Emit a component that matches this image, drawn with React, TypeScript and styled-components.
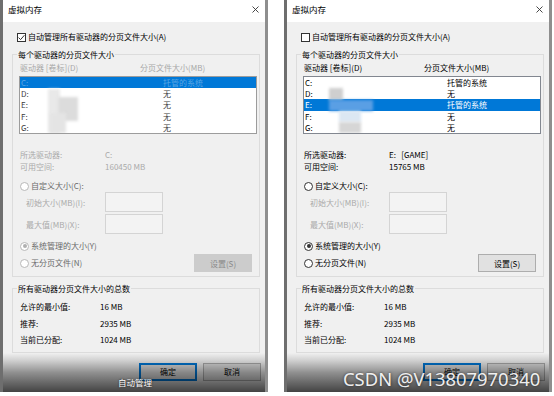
import React from 'react';
import styled, { createGlobalStyle } from 'styled-components';

const GlobalStyle = createGlobalStyle`
  html, body { margin: 0; padding: 0; background: #fff; }
  body { font-family: "Noto Sans CJK SC", "Noto Sans", sans-serif; }
  * { box-sizing: border-box; }
`;

const Page = styled.div`
  width: 554px;
  height: 396px;
  display: flex;
  gap: 16px;
  overflow: hidden;
  background: #fff;
`;

const Window = styled.div`
  position: relative;
  flex: none;
  width: 268px;
  height: 392px;
  display: flex;
  flex-direction: column;
  border-left: 3px solid #6e6e6e;
  border-right: 3px solid #8e8e8e;
  background: #f0f0f0;
  font-size: 8px;
  color: #000;
`;

const TitleBar = styled.div`
  height: 22px;
  flex: none;
  background: #fff;
  display: flex;
  align-items: center;
  justify-content: space-between;
  padding: 0 6px 4px 5px;
`;

const Title = styled.span`
  font-size: 8.5px;
  line-height: 10px;
  color: #000;
`;

const CloseIcon = () => (
  <svg width="7" height="7" viewBox="0 0 7 7">
    <path d="M0.5 0.5 L6.5 6.5 M6.5 0.5 L0.5 6.5" stroke="#333" strokeWidth="0.9" fill="none" />
  </svg>
);

const CheckRow = styled.div`
  display: flex;
  align-items: center;
  gap: 2px;
  height: 10px;
  line-height: 10px;
  margin: 10px 0 0 14px;
`;

const CheckBox = styled.span`
  width: 9px;
  height: 9px;
  border: 1px solid #333;
  background: #fff;
  display: flex;
  align-items: center;
  justify-content: center;
`;

const Group = styled.div<{ $mt: number; $pad: string }>`
  position: relative;
  margin: ${p => p.$mt}px 5px 0 9px;
  padding: ${p => p.$pad};
  border: 1px solid #dcdcdc;
`;

const Legend = styled.span`
  position: absolute;
  top: -6px;
  left: 4px;
  padding: 0 1px;
  background: #f0f0f0;
  line-height: 11px;
  color: #000;
`;

const HeaderRow = styled.div<{ $on: boolean }>`
  display: grid;
  grid-template-columns: 120px 1fr;
  margin: 8px 0 0 7px;
  line-height: 9px;
  height: 9px;
  color: ${p => (p.$on ? '#000' : '#a8a8a8')};
`;

const ListBox = styled.div<{ $on: boolean }>`
  position: relative;
  margin: 4px 0 0 6px;
  width: 238px;
  height: 58px;
  border: 1px solid ${p => (p.$on ? '#828790' : '#9c9c9c')};
  background: #fff;
  overflow: hidden;
`;

const ListRow = styled.div<{ $sel: boolean; $on: boolean }>`
  display: grid;
  grid-template-columns: 142px 1fr;
  height: 11.2px;
  line-height: 11.2px;
  padding-left: 1px;
  background: ${p => (p.$sel ? '#0078d7' : 'transparent')};
  color: ${p =>
    p.$sel ? (p.$on ? '#fff' : 'rgba(255,255,255,0.35)') : p.$on ? '#000' : '#3c3c3c'};
`;

const Smudge = styled.div<{ $x: number; $y: number; $w: number; $h: number; $c: string }>`
  position: absolute;
  left: ${p => p.$x}px;
  top: ${p => p.$y}px;
  width: ${p => p.$w}px;
  height: ${p => p.$h}px;
  background: ${p => p.$c};
  filter: blur(1.5px);
`;

const InfoGrid = styled.div<{ $on: boolean }>`
  display: grid;
  grid-template-columns: 85px 1fr;
  grid-auto-rows: 12px;
  line-height: 12px;
  margin: 15px 0 0 7px;
  color: ${p => (p.$on ? '#000' : '#aaaaaa')};
  white-space: pre;
`;

const RadioRow = styled.div<{ $mt: number; $tone: string }>`
  display: flex;
  align-items: center;
  gap: 2px;
  height: 10px;
  line-height: 10px;
  margin: ${p => p.$mt}px 0 0 7px;
  color: ${p => p.$tone};
`;

const RadioDot = styled.span<{ $on: boolean; $checked: boolean }>`
  width: 9px;
  height: 9px;
  border-radius: 50%;
  border: 1px solid ${p => (p.$on ? '#333' : '#b8b8b8')};
  background: #fff;
  display: flex;
  align-items: center;
  justify-content: center;
  &::after {
    content: '';
    display: ${p => (p.$checked ? 'block' : 'none')};
    width: 4px;
    height: 4px;
    border-radius: 50%;
    background: ${p => (p.$on ? '#333' : '#b0b0b0')};
  }
`;

const SizeRow = styled.div<{ $mt: number }>`
  display: grid;
  grid-template-columns: 79px 58px;
  align-items: center;
  height: 20px;
  margin: ${p => p.$mt}px 0 0 13px;
  color: #aaaaaa;
`;

const SizeInput = styled.div`
  width: 58px;
  height: 20px;
  border: 1px solid #d4d4d4;
  background: #f3f3f3;
`;

const BottomRow = styled.div`
  display: flex;
  align-items: center;
  justify-content: space-between;
  height: 18px;
  margin-top: 3px;
  padding-right: 7px;
`;

const SetButton = styled.div<{ $on: boolean }>`
  width: 58px;
  height: 18px;
  display: flex;
  align-items: center;
  justify-content: center;
  border: 1px solid ${p => (p.$on ? '#adadad' : '#cccccc')};
  background: ${p => (p.$on ? '#e1e1e1' : '#cccccc')};
  color: ${p => (p.$on ? '#000' : '#8a8a8a')};
`;

const SummaryGrid = styled.div`
  display: grid;
  grid-template-columns: 80px 1fr;
  grid-auto-rows: 16.5px;
  line-height: 16.5px;
`;

const Footer = styled.div`
  position: relative;
  flex: 1;
  display: flex;
  justify-content: flex-end;
  align-items: flex-start;
  gap: 6px;
  padding: 10px 4px 0 0;
  &::after {
    content: '';
    position: absolute;
    inset: 0;
    background: linear-gradient(
      to bottom,
      rgba(0, 0, 0, 0) 0%,
      rgba(0, 0, 0, 0.14) 20%,
      rgba(0, 0, 0, 0.4) 50%,
      rgba(0, 0, 0, 0.72) 100%
    );
    pointer-events: none;
  }
`;

const DialogButton = styled.div<{ $primary?: boolean }>`
  width: 58px;
  height: 18px;
  display: flex;
  align-items: center;
  justify-content: center;
  border: 1px solid ${p => (p.$primary ? '#0078d7' : '#adadad')};
  box-shadow: ${p => (p.$primary ? 'inset 0 0 0 1px #0078d7' : 'none')};
  background: #e1e1e1;
  color: #000;
`;

const Caption = styled.div`
  position: absolute;
  left: 115px;
  top: 377px;
  z-index: 2;
  font-size: 8.5px;
  line-height: 11px;
  color: #fff;
  text-shadow: 0 0 2px rgba(0, 0, 0, 0.8);
`;

const Watermark = styled.div`
  position: absolute;
  left: 56px;
  top: 368px;
  z-index: 2;
  font-family: "Noto Sans", sans-serif;
  font-size: 18.4px;
  line-height: 22px;
  color: rgba(255, 255, 255, 0.92);
  text-shadow: 0 0 3px rgba(0, 0, 0, 0.6);
  white-space: nowrap;
`;

type SmudgeDef = { x: number; y: number; w: number; h: number; c: string };

type WinDef = {
  key: string;
  enabled: boolean;
  auto: boolean;
  selected: number;
  rows: [string, string][];
  drive: string;
  free: string;
  smudges: SmudgeDef[];
  caption?: string;
  watermark?: string;
};

const windows: WinDef[] = [
  {
    key: 'a',
    enabled: false,
    auto: true,
    selected: 0,
    rows: [
      ['C:', '托管的系统'],
      ['D:', '无'],
      ['E:', '无'],
      ['F:', '无'],
      ['G:', '无'],
    ],
    drive: 'C:',
    free: '160450 MB',
    smudges: [
      { x: 28, y: 12, w: 12, h: 44, c: '#e9e9e9' },
      { x: 38, y: 20, w: 20, h: 24, c: '#dcdcdc' },
      { x: 30, y: 36, w: 16, h: 20, c: '#e4e4e4' },
    ],
    caption: '自动管理',
  },
  {
    key: 'b',
    enabled: true,
    auto: false,
    selected: 2,
    rows: [
      ['C:', '托管的系统'],
      ['D:', '无'],
      ['E:', '托管的系统'],
      ['F:', '无'],
      ['G:', '无'],
    ],
    drive: 'E:   [GAME]',
    free: '15765 MB',
    smudges: [
      { x: 25, y: 11, w: 14, h: 12, c: '#cfcfcf' },
      { x: 25, y: 23, w: 44, h: 11, c: '#5a9fe4' },
      { x: 35, y: 34, w: 22, h: 11, c: '#dbe7f3' },
      { x: 35, y: 45, w: 22, h: 11, c: '#d6d6d6' },
    ],
    watermark: 'CSDN @V13807970340',
  },
];

const Dialog = ({ w }: { w: WinDef }) => {
  const on = w.enabled;
  const radioTone = on ? '#000' : '#6a6a6a';
  return (
    <Window>
      <TitleBar>
        <Title>虚拟内存</Title>
        <CloseIcon />
      </TitleBar>
      <CheckRow>
        <CheckBox>
          {w.auto && (
            <svg width="7" height="7" viewBox="0 0 7 7">
              <path d="M0.6 3.6 L2.6 5.6 L6.4 1.2" stroke="#333" strokeWidth="1" fill="none" />
            </svg>
          )}
        </CheckBox>
        <span>自动管理所有驱动器的分页文件大小(A)</span>
      </CheckRow>

      <Group $mt={12} $pad="0 0 4px 0">
        <Legend>每个驱动器的分页文件大小</Legend>
        <HeaderRow $on={on}>
          <span>驱动器 [卷标](D)</span>
          <span>分页文件大小(MB)</span>
        </HeaderRow>
        <ListBox $on={on}>
          {w.rows.map(([d, s], i) => (
            <ListRow key={d} $sel={i === w.selected} $on={on}>
              <span>{d}</span>
              <span>{s}</span>
            </ListRow>
          ))}
          {w.smudges.map((s, i) => (
            <Smudge key={i} $x={s.x} $y={s.y} $w={s.w} $h={s.h} $c={s.c} />
          ))}
        </ListBox>
        <InfoGrid $on={on}>
          <span>所选驱动器:</span>
          <span>{w.drive}</span>
          <span>可用空间:</span>
          <span>{w.free}</span>
        </InfoGrid>
        <RadioRow $mt={8} $tone={radioTone}>
          <RadioDot $on={on} $checked={false} />
          <span>自定义大小(C):</span>
        </RadioRow>
        <SizeRow $mt={1}>
          <span>初始大小(MB)(I):</span>
          <SizeInput />
        </SizeRow>
        <SizeRow $mt={2}>
          <span>最大值(MB)(X):</span>
          <SizeInput />
        </SizeRow>
        <RadioRow $mt={7} $tone={radioTone}>
          <RadioDot $on={on} $checked />
          <span>系统管理的大小(Y)</span>
        </RadioRow>
        <BottomRow>
          <RadioRow $mt={0} $tone={radioTone}>
            <RadioDot $on={on} $checked={false} />
            <span>无分页文件(N)</span>
          </RadioRow>
          <SetButton $on={on}>设置(S)</SetButton>
        </BottomRow>
      </Group>

      <Group $mt={11} $pad="10px 0 3px 7px">
        <Legend>所有驱动器分页文件大小的总数</Legend>
        <SummaryGrid>
          <span>允许的最小值:</span>
          <span>16 MB</span>
          <span>推荐:</span>
          <span>2935 MB</span>
          <span>当前已分配:</span>
          <span>1024 MB</span>
        </SummaryGrid>
      </Group>

      <Footer>
        <DialogButton $primary>确定</DialogButton>
        <DialogButton>取消</DialogButton>
      </Footer>
      {w.caption && <Caption>{w.caption}</Caption>}
      {w.watermark && <Watermark>{w.watermark}</Watermark>}
    </Window>
  );
};

export default function App() {
  return (
    <>
      <GlobalStyle />
      <Page>
        {windows.map(w => (
          <Dialog key={w.key} w={w} />
        ))}
      </Page>
    </>
  );
}
